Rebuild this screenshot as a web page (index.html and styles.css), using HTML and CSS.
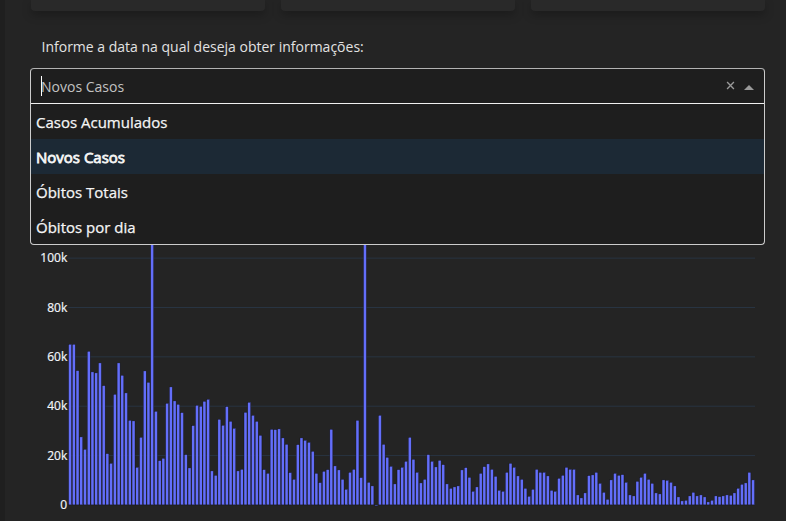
FILE: index.html
```html
<!DOCTYPE html>
<html lang="pt-BR">
<head>
<meta charset="utf-8">
<title>Painel</title>
<link rel="stylesheet" href="styles.css">
</head>
<body>
<main class="panel">
  <div class="cards"><div class="card"></div><div class="card"></div><div class="card"></div></div>
  <p class="prompt">Informe a data na qual deseja obter informações:</p>
  <div class="select">
    <div class="control">
      <span class="caret"></span><span class="value">Novos Casos</span>
      <svg class="clear" viewBox="0 0 10 10"><path d="M1.2 1.2 8.8 8.8M8.8 1.2 1.2 8.8"/></svg>
      <svg class="arrow" viewBox="0 0 10 5"><path d="M0 5 5 0 10 5Z"/></svg>
    </div>
    <div class="menu">
      <div class="option">Casos Acumulados</div>
      <div class="option focused">Novos Casos</div>
      <div class="option">Óbitos Totais</div>
      <div class="option">Óbitos por dia</div>
    </div>
  </div>
  <svg class="chart" id="chart" viewBox="0 0 735 276"></svg>
</main>
<script src="chart.js"></script>
</body>
</html>
```
FILE: styles.css
```css
* { box-sizing: border-box; }
body {
  margin: 0;
  height: 521px;
  overflow: hidden;
  background: #242424;
  border-left: 5px solid #1f1f1f;
  font-family: "Open Sans", "Noto Sans", sans-serif;
  color: #e0e0e0;
}
.panel { padding: 0 21px 0 25px; }
.cards { display: grid; grid-template-columns: 234px 234px 234px; gap: 16px; height: 11px; padding-left: 1px; }
.card {
  background: #292929;
  border-radius: 0 0 4px 4px;
  box-shadow: 0 4px 10px rgba(0, 0, 0, .25);
}
.prompt { margin: 26px 0 0 11.5px; font-size: 14px; line-height: 20px; height: 31px; white-space: nowrap; color: #e2e2e2; }
.select {
  width: 735px;
  height: 177px;
  border: 1px solid #ccc;
  border-top-color: #b3b3b3;
  border-radius: 4px;
  background: #1e1e1e;
  overflow: hidden;
}
.control {
  display: flex;
  align-items: center;
  height: 35px;
  padding: 0 10px;
  border-bottom: 1px solid #f0f0f0;
  font-size: 14px;
  color: #c2c2c2;
}
.caret { width: 1px; height: 20px; background: #fff; margin-right: -1px; }
.value { flex: 1; line-height: 34px; padding-top: 1px; }
.clear { width: 9px; height: 9px; fill: none; stroke: #999; stroke-width: 1.5; margin: -1px 9px 0 0; }
.arrow { width: 10px; height: 5px; fill: #999; margin-top: 3px; }
.option { height: 35px; padding-left: 5px; font-size: 15px; line-height: 36px; color: #f5f5f5; -webkit-text-stroke: .25px #f5f5f5; }
.focused { background: #1c2935; -webkit-text-stroke: .8px #f5f5f5; }
.chart { display: block; width: 735px; height: 276px; }
.grid { stroke: #283442; stroke-width: 1; }
.tick { fill: #f2f5fa; stroke: #f2f5fa; stroke-width: .2; font-size: 12px; text-anchor: end; }
.bar { fill: #636efa; stroke: #111; stroke-width: .4; }
```
FILE: chart.js
```js
const NS = "http://www.w3.org/2000/svg";
const chart = document.getElementById("chart");
const BASE = 259.9, STEP = 49.35, LEFT = 38.2, PITCH = 3.7325;

// Bar heights in thirds of a pixel; 960 runs past the top of the plot.
const heights = [
  482,482,403,204,167,461,399,396,426,358,154,125,332,426,389,336,254,252,113,203,402,368,960,281,133,140,305,354,312,302,277,151,111,238,299,296,311,317,102,89,
  257,239,295,251,230,102,107,278,308,269,251,209,106,95,227,226,228,201,182,97,77,181,201,194,188,161,95,67,101,106,227,117,105,77,47,98,107,254,82,960,68,57,-3,269,
  182,143,116,63,106,113,131,203,137,98,66,77,151,131,114,134,121,63,50,54,57,105,112,83,41,54,95,115,123,107,86,44,41,98,125,113,87,77,50,26,47,107,98,98,87,44,41,80,
  89,113,107,107,30,21,36,88,90,98,65,38,17,75,95,89,91,68,30,27,71,83,95,77,65,36,33,75,74,68,57,24,12,14,27,38,27,30,24,9,14,27,25,27,30,29,36,50,62,66,98,75
];

function add(tag, cls, attrs, text) {
  const el = document.createElementNS(NS, tag);
  el.setAttribute("class", cls);
  for (const key in attrs) el.setAttribute(key, attrs[key]);
  if (text) el.textContent = text;
  chart.appendChild(el);
}

["0", "20k", "40k", "60k", "80k", "100k"].forEach((label, i) => {
  const y = BASE - i * STEP;
  if (i) add("line", "grid", { x1: LEFT, x2: 725, y1: y, y2: y });
  add("text", "tick", { x: 37.2, y: y + 4.2 }, label);
});

heights.forEach((value, i) => {
  const h = Math.abs(value) / 3;
  add("rect", "bar", {
    x: LEFT + i * PITCH + PITCH * .1,
    y: value < 0 ? BASE : BASE - h,
    width: PITCH * .8,
    height: h
  });
});
```
